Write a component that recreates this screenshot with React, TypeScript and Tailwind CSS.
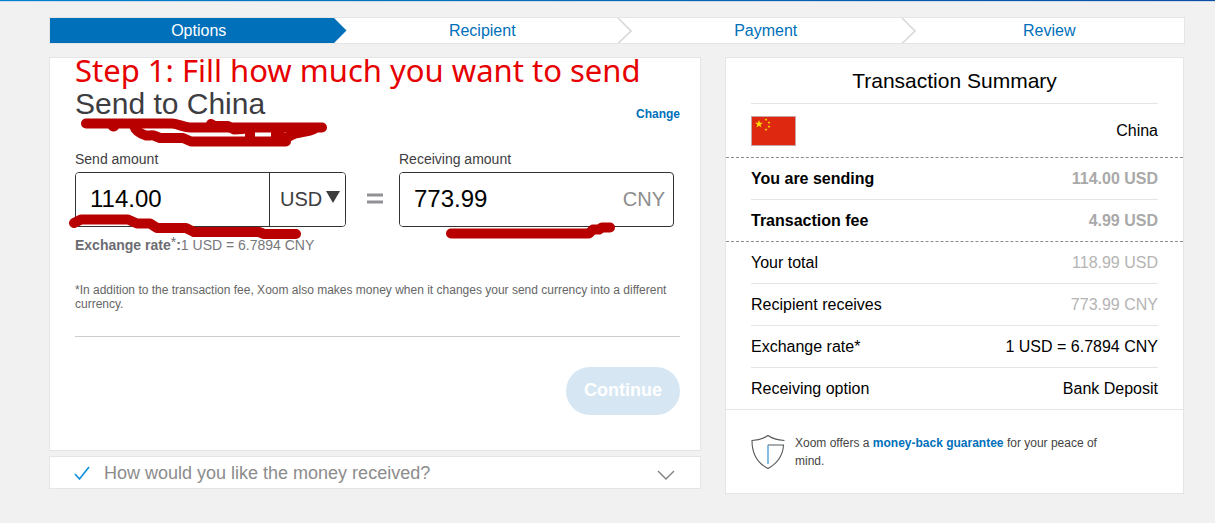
import React from "react";

const steps = ["Options", "Recipient", "Payment", "Review"];

type SummaryRow = {
  label: string;
  value: string;
  row: string;
  line: string;
  valueClass: string;
};

const solid = "border-[#e5e5e5] border-solid mx-[25px]";
const dashed = "border-[#8c8c8c] border-dashed px-[25px]";

const rows: SummaryRow[] = [
  { label: "You are sending", value: "114.00 USD", row: "font-bold", line: solid, valueClass: "text-[#a9a9a9]" },
  { label: "Transaction fee", value: "4.99 USD", row: "font-bold", line: dashed, valueClass: "text-[#a9a9a9]" },
  { label: "Your total", value: "118.99 USD", row: "", line: solid, valueClass: "text-[#b4b4b4]" },
  { label: "Recipient receives", value: "773.99 CNY", row: "", line: solid, valueClass: "text-[#b4b4b4]" },
  { label: "Exchange rate*", value: "1 USD = 6.7894 CNY", row: "", line: solid, valueClass: "text-black" },
  { label: "Receiving option", value: "Bank Deposit", row: "", line: "border-[#e5e5e5] border-solid px-[25px]", valueClass: "text-black" },
];

function StepBar() {
  return (
    <nav aria-label="Progress">
      <ol className="grid grid-cols-4 border border-[#e5e5e5] bg-white text-base leading-[25px]">
        {steps.map((step, i) => (
          <li
            key={step}
            className={
              i === 0
                ? "relative bg-[#0070ba] text-center text-white"
                : "relative text-center text-[#0070ba]"
            }
          >
            <a href="#" className="block pl-[14px]">
              {step}
            </a>
            {i === 0 && (
              <svg className="absolute top-0 left-full z-10" width="13" height="25" viewBox="0 0 13 25" aria-hidden="true">
                <path d="M0 0L12.500 12.500L0 25Z" fill="#0070ba" />
              </svg>
            )}
            {(i === 1 || i === 2) && (
              <svg className="absolute top-0 left-full z-10" width="15" height="25" viewBox="0 0 15 25" aria-hidden="true">
                <path d="M1 0L14 13L1 25.5" fill="none" stroke="#d9d9d9" strokeWidth="1.6" />
              </svg>
            )}
          </li>
        ))}
      </ol>
    </nav>
  );
}

function Scribbles() {
  return (
    <svg
      className="pointer-events-none absolute top-0 left-0 overflow-visible"
      width="650"
      height="200"
      viewBox="50 58 650 200"
      fill="none"
      stroke="#b90000"
      strokeWidth="10"
      strokeLinecap="round"
      strokeLinejoin="round"
      aria-hidden="true"
    >
      <path d="M86 123.500H172C179 124 184 127.500 190 127.500H322" />
      <path d="M211 124L214 126L228 126L234 129.500L243 129" />
      <path d="M113 126.500H114" />
      <path d="M134 126C136 132 141 134 146 135.500C150 136 152 134.500 155 136L160 138L183 138L191 141.500H286" />
      <path d="M250 129V138" />
      <path d="M276 131V139" />
      <path d="M314 129C306 133 297 131 290 136L284 139L278 133" />
      <path d="M74 223L81 219.500H128L137 223.500H150L157 228H186L194 232L259 232L264 234H296" />
      <path d="M451 233.500H589L593 229.500H599L602 227.500H610" />
    </svg>
  );
}

function SendPanel() {
  return (
    <section className="relative border border-[#e5e5e5] bg-white pt-7 pr-5 pb-[35px] pl-[25px]">
      <div className="flex items-end justify-between">
        <h1 className="text-[30px] leading-9 text-[#3d3d42]">Send to China</h1>
        <a href="#" className="text-xs leading-4 font-bold text-[#0070ba]">
          Change
        </a>
      </div>

      <div className="mt-7 flex">
        <div className="w-[271px]">
          <label htmlFor="send" className="block text-sm leading-[18px] text-[#3d3d42]">
            Send amount
          </label>
          <div className="mt-1 flex h-[55px] overflow-hidden rounded-[4px] border border-[#333]">
            <input
              id="send"
              defaultValue="114.00"
              className="w-0 flex-1 bg-white pb-0.5 pl-[14px] text-2xl text-black outline-none"
            />
            <div className="relative w-[76px] border-l border-[#333]">
              <select
                aria-label="Send currency"
                className="h-full w-full appearance-none bg-white pb-0.5 pl-[10px] text-xl text-[#3d3d42] outline-none"
              >
                <option>USD</option>
              </select>
              <svg
                className="pointer-events-none absolute top-[18px] right-[5px]"
                width="14"
                height="12"
                viewBox="0 0 14 12"
                aria-hidden="true"
              >
                <path d="M0 0H14L7 12Z" fill="#3d3d3d" />
              </svg>
            </div>
          </div>
        </div>
        <div className="flex w-[53px] items-center justify-center pt-5 pl-1" aria-hidden="true">
          <svg width="16" height="11" viewBox="0 0 16 11">
            <path d="M0 2H16M0 9H16" stroke="#929296" strokeWidth="3" />
          </svg>
        </div>
        <div className="w-[275px]">
          <label htmlFor="receive" className="block text-sm leading-[18px] text-[#3d3d42]">
            Receiving amount
          </label>
          <div className="mt-1 flex h-[55px] items-center overflow-hidden rounded-[4px] border border-[#333] pr-2">
            <input
              id="receive"
              defaultValue="773.99"
              className="h-full w-0 flex-1 bg-white pb-0.5 pl-[14px] text-2xl text-black outline-none"
            />
            <span className="pb-0.5 text-xl text-[#8c8c8c]">CNY</span>
          </div>
        </div>
      </div>

      <p className="mt-2 text-sm leading-5 text-[#77777c]">
        <b className="text-[#6c6c72]">
          Exchange rate
          <span className="align-[3px] text-sm leading-none font-normal">*</span>:
        </b>
        1 USD = 6.7894 CNY
      </p>
      <p className="mt-7 text-xs leading-[14px] text-[#666]">
        *In addition to the transaction fee, Xoom also makes money when it changes your send currency into a different
        currency.
      </p>
      <hr className="mt-[25px] border-[#ccc]" />
      <div className="mt-[30px] flex justify-end">
        <button type="button" className="h-12 w-[114px] rounded-full bg-[#d6e7f3] pb-0.5 text-lg font-bold text-white">
          Continue
        </button>
      </div>

      <p className="pointer-events-none absolute -top-1.5 left-[25px] font-['Noto_Sans',sans-serif] text-[31px] leading-9 whitespace-nowrap text-[#e60000]">
        Step 1: Fill how much you want to send
      </p>
      <Scribbles />
    </section>
  );
}

function ReceiveOption() {
  return (
    <button
      type="button"
      className="mt-[5px] flex w-full items-center border border-[#e5e5e5] bg-white pt-0.5 pr-[25px] pl-6 text-left text-lg leading-[29px] text-[#8c8c8c]"
    >
      <svg className="mr-[14px]" width="16" height="15" viewBox="0 0 16 15" fill="none" aria-hidden="true">
        <path d="M1 8L5.500 13L15 1" stroke="#1491dc" strokeWidth="1.7" />
      </svg>
      <span className="flex-1">How would you like the money received?</span>
      <svg className="mt-0.5" width="18" height="10" viewBox="0 0 18 10" fill="none" aria-hidden="true">
        <path d="M1 1L9 9L17 1" stroke="#808080" strokeWidth="1.4" />
      </svg>
    </button>
  );
}

function Flag() {
  const star = "M0 -4L1 -1.200H4L1.600 0.600L2.500 3.500L0 1.700L-2.500 3.500L-1.600 0.600L-4 -1.200H-1Z";
  return (
    <svg width="45" height="30" viewBox="0 0 45 30" role="img" aria-label="Flag of China">
      <rect x="0.500" y="0.500" width="44" height="29" fill="#de2910" stroke="#c7a5a2" />
      <g fill="#ffde00">
        <path d={star} transform="translate(8 8)" />
        <path d={star} transform="translate(15 3.500) scale(0.380)" />
        <path d={star} transform="translate(18 6.500) scale(0.380)" />
        <path d={star} transform="translate(18 10.500) scale(0.380)" />
        <path d={star} transform="translate(15 13.500) scale(0.380)" />
      </g>
    </svg>
  );
}

function Summary() {
  return (
    <aside className="border border-[#e5e5e5] bg-white text-base text-black">
      <h2 className="mx-[25px] border-b border-[#e5e5e5] text-center text-[21px] leading-[45px]">Transaction Summary</h2>
      <div className="flex h-[54px] items-center justify-between border-b border-dashed border-[#8c8c8c] px-[25px]">
        <Flag />
        <span>China</span>
      </div>
      <dl>
        {rows.map((r) => (
          <div key={r.label} className={`flex justify-between border-b leading-[41px] ${r.line} ${r.row}`}>
            <dt>{r.label}</dt>
            <dd className={r.valueClass}>{r.value}</dd>
          </div>
        ))}
      </dl>
      <div className="flex items-center px-[25px] pt-6 pb-[23px]">
        <svg className="mr-[10px] shrink-0" width="34" height="36" viewBox="0 0 34 36" fill="none" aria-hidden="true">
          <path
            d="M33.500 6.500C27 6 21 4.500 17 1.500C13 4.500 7 6 1 6.500C1 19 6 29 17 34.500C27 29 32 20 32.500 11H17"
            stroke="#55595c"
            strokeWidth="1.100"
          />
          <path d="M17 11V30" stroke="#3a8fd0" strokeWidth="1.200" />
        </svg>
        <p className="max-w-[320px] text-xs leading-[18px] text-[#444]">
          Xoom offers a{" "}
          <a href="#" className="font-bold text-[#0070ba]">
            money-back guarantee
          </a>{" "}
          for your peace of mind.
        </p>
      </div>
    </aside>
  );
}

export default function App() {
  return (
    <div className="min-h-screen bg-[#f1f1f1] font-['Liberation_Sans',Arial,sans-serif]">
      <div className="h-[2px] border-b border-[#cfdce8] bg-linear-to-r from-[#0083cf] to-[#0b4ea8]" />
      <div className="pt-[15px] pr-[30px] pl-[49px]">
        <StepBar />
        <main className="mt-[13px] grid grid-cols-[652fr_459fr] items-start gap-6 pr-px">
          <div>
            <SendPanel />
            <ReceiveOption />
          </div>
          <Summary />
        </main>
      </div>
    </div>
  );
}
